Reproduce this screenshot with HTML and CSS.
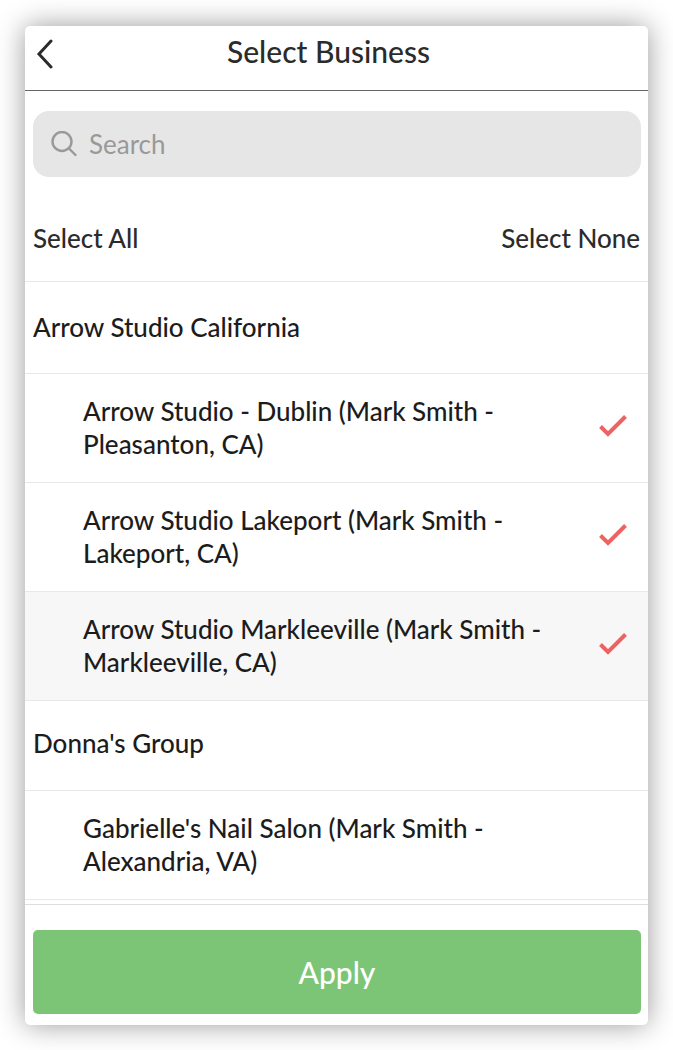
FILE: index.html
```html
<!DOCTYPE html>
<html lang="en">

  <head>
    <meta charset="utf-8">
    <meta name="viewport" content="width=device-width, initial-scale=1">
    <title>Select Business</title>
    <link rel="stylesheet" href="styles.css">
  </head>

  <body>
    <form class="panel">
      <header class="header">
        <button type="button" class="back" aria-label="Back">
          <svg width="18" height="30" viewBox="0 0 18 30"><path d="M15 2 L3 15 L15 28"/></svg>
        </button>
        <h1>Select Business</h1>
      </header>

      <label class="search">
        <svg width="27" height="27" viewBox="0 0 27 27"><circle cx="11" cy="10.5" r="9.5"/><path d="M18 17.5 L24.5 24"/></svg>
        <input type="search" placeholder="Search" aria-label="Search">
      </label>

      <div class="select">
        <button type="button">Select All</button>
        <button type="button">Select None</button>
      </div>

      <h2 class="group">Arrow Studio California</h2>
      <label class="row">
        <span>Arrow Studio - Dublin (Mark Smith -<br>Pleasanton, CA)</span>
        <input type="checkbox" checked>
        <svg class="check" width="28" height="22" viewBox="0 0 28 22"><path d="M1.5 11.5 L9 19 L26.5 1.5"/></svg>
      </label>
      <label class="row">
        <span>Arrow Studio Lakeport (Mark Smith -<br>Lakeport, CA)</span>
        <input type="checkbox" checked>
        <svg class="check" width="28" height="22" viewBox="0 0 28 22"><path d="M1.5 11.5 L9 19 L26.5 1.5"/></svg>
      </label>
      <label class="row active">
        <span>Arrow Studio Markleeville (Mark Smith -<br>Markleeville, CA)</span>
        <input type="checkbox" checked>
        <svg class="check" width="28" height="22" viewBox="0 0 28 22"><path d="M1.5 11.5 L9 19 L26.5 1.5"/></svg>
      </label>

      <h2 class="group">Donna's Group</h2>
      <label class="row">
        <span>Gabrielle's Nail Salon (Mark Smith -<br>Alexandria, VA)</span>
        <input type="checkbox">
        <svg class="check" width="28" height="22" viewBox="0 0 28 22"><path d="M1.5 11.5 L9 19 L26.5 1.5"/></svg>
      </label>

      <footer class="footer">
        <button type="submit" class="apply">Apply</button>
      </footer>
    </form>
  </body>

</html>
```
FILE: styles.css
```css
* {
  box-sizing: border-box;
}
body {
  margin: 0;
  padding: 26px 25px 25px;
  background: #fff;
  color: #1c1c1c;
  font: 500 26px/33px Lato, "Open Sans", sans-serif;
}
button, input {
  font: inherit;
  color: inherit;
  border: 0;
  padding: 0;
  background: none;
}
button {
  cursor: pointer;
}
svg {
  display: block;
  flex: none;
  fill: none;
  stroke-linecap: round;
}
.panel {
  background: #fff;
  border-radius: 5px;
  box-shadow: 0 0 28px rgba(0, 0, 0, 0.4);
}

/* title bar */
.header {
  display: grid;
  grid-template-columns: 40px 1fr 56px;
  align-items: start;
  height: 65px;
  padding-top: 9px;
  border-bottom: 1px solid #666;
  color: #2b2b2b;
}
.header h1 {
  margin: 0;
  font-size: 30px;
  font-weight: 500;
  text-align: center;
}
.back {
  padding: 4px 0 0 11px;
}
.back svg {
  stroke: #2b2b2b;
  stroke-width: 3;
}

.search {
  display: flex;
  align-items: center;
  gap: 11px;
  height: 66px;
  margin: 20px 7px 0 8px;
  padding: 0 18px;
  border-radius: 16px;
  background: #e6e6e6;
}
.search svg {
  stroke: #999;
  stroke-width: 2.4;
}
.search input {
  flex: 1;
  min-width: 0;
  outline: none;
  font-weight: 400;
}
.search input::placeholder {
  color: #999;
  opacity: 1;
}

.select {
  display: flex;
  justify-content: space-between;
  align-items: center;
  height: 105px;
  padding: 18px 8px 0;
  border-bottom: 1px solid #e8e8e8;
  color: #2b2b2b;
}

/* business list */
.group {
  margin: 0;
  padding: 29px 8px;
  font-size: 26px;
  font-weight: 500;
  border-bottom: 1px solid #e8e8e8;
}
.row + .group {
  padding: 26px 8px 30px;
}
.row {
  display: flex;
  justify-content: space-between;
  align-items: center;
  padding: 21px 21px 21px 58px;
  border-bottom: 1px solid #e8e8e8;
}
.row.active {
  background: #f7f7f7;
}
.row input {
  appearance: none;
  width: 0;
  margin: 0 0 0 auto;
}
.check {
  visibility: hidden;
  margin-bottom: 4px;
  stroke: #ee6262;
  stroke-width: 4;
  stroke-linecap: butt;
}
.row input:checked + .check {
  visibility: visible;
}

.footer {
  margin-top: 4px;
  padding: 25px 7px 11px 8px;
  border-top: 1px solid #dedede;
}
.apply {
  display: block;
  width: 100%;
  height: 84px;
  border-radius: 5px;
  background: #7cc576;
  color: #fff;
  font-size: 30px;
}
```
